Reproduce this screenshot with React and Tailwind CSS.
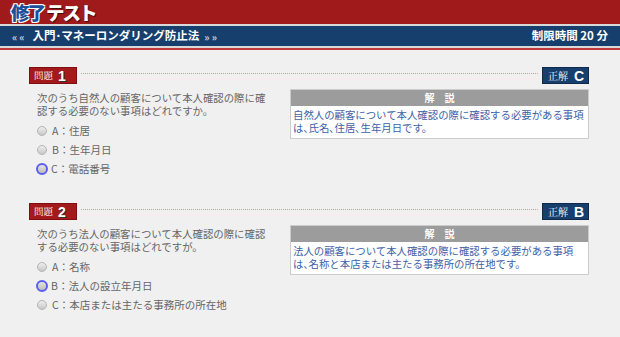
import React from "react";

const questions = [
  {
    no: "1",
    lines: ["次のうち自然人の顧客について本人確認の際に確", "認する必要のない事項はどれですか。"],
    options: ["A：住居", "B：生年月日", "C：電話番号"],
    picked: 2,
    answer: "C",
    note: ["自然人の顧客について本人確認の際に確認する必要がある事項", "は､氏名､住居､生年月日です。"],
  },
  {
    no: "2",
    lines: ["次のうち法人の顧客について本人確認の際に確認", "する必要のない事項はどれですが。"],
    options: ["A：名称", "B：法人の設立年月日", "C：本店または主たる事務所の所在地"],
    picked: 1,
    answer: "B",
    note: ["法人の顧客について本人確認の際に確認する必要がある事項", "は､名称と本店または主たる事務所の所在地です。"],
  },
];

const sans = { fontFamily: '"Noto Sans CJK JP", "Noto Sans", sans-serif' };

function Radio({ checked }) {
  if (checked) {
    return (
      <span className="w-[12px] h-[12px] rounded-full border-2 border-[#5a5ef0] bg-gradient-to-b from-[#e4e4e4] to-[#bdbdbd] shrink-0 -ml-[1px] mr-[3px]" />
    );
  }
  return (
    <span className="w-[10px] h-[10px] rounded-full border border-[#b4b4b4] bg-gradient-to-b from-[#eeeeee] to-[#c8c8c8] shrink-0 mr-[5px]" />
  );
}

function Question({ q }) {
  return (
    <div className="pl-[29px] pr-[31px]">
      <div className="flex items-center h-[17px]">
        <div className="h-[17px] w-[48px] bg-[#a3191c] border border-[#7d1013] flex items-center pl-[4px] gap-[5px]">
          <span className="text-white text-[9.5px] leading-none font-['Noto_Serif_CJK_JP','Liberation_Serif',serif]">問題</span>
          <span className="text-white text-[14px] font-bold leading-none font-['Liberation_Sans',sans-serif] [text-shadow:1px_1px_0_#333]">{q.no}</span>
        </div>
        <div className="flex-1 mx-[4px] border-t border-dotted border-[#d79a9f] -mt-[5px]" />
        <div className="h-[17px] w-[47px] bg-[#173f6d] border border-[#0f2a4c] flex items-center pl-[5px] gap-[6px]">
          <span className="text-white text-[10px] leading-none font-['Noto_Serif_CJK_JP','Liberation_Serif',serif]">正解</span>
          <span className="text-white text-[14px] font-bold leading-none font-['Liberation_Sans',sans-serif]">{q.answer}</span>
        </div>
      </div>
      <div className="flex">
        <div className="w-[261px] shrink-0 pl-[8px] pt-[8px]">
          <p className="text-[10.4px] leading-[12.5px] text-[#666666] whitespace-nowrap">
            {q.lines[0]}
            <br />
            {q.lines[1]}
          </p>
          <div className="mt-[7px] flex flex-col gap-[6px]">
            {q.options.map((o, i) => (
              <div key={i} className="flex items-center h-[13px] text-[10.5px] leading-[13px] text-[#666666]">
                <Radio checked={i === q.picked} />
                <span>{o}</span>
              </div>
            ))}
          </div>
        </div>
        <div className="flex-1 min-w-0 mt-[5px]">
          <div className="border border-[#cccccc] bg-white">
            <div className="h-[16px] bg-[#9c9c9c] flex items-center justify-center text-white text-[10px] font-bold tracking-[10px] pl-[10px] leading-none">
              解説
            </div>
            <p className="px-[2px] pt-[2px] pb-[4px] text-[10.4px] leading-[13px] text-[#3d62a8] whitespace-nowrap overflow-hidden">
              {q.note[0]}
              <br />
              {q.note[1]}
            </p>
          </div>
        </div>
      </div>
    </div>
  );
}

export default function App() {
  return (
    <div className="w-[620px] h-[337px] bg-[#f0f0f0] overflow-hidden" style={sans}>
      <div className="h-[24px] bg-[#a01a1c] flex items-center pl-[11px]">
        <span className="text-[18.5px] font-black leading-none tracking-[-2px] text-[#1c4f94] [text-shadow:1px_1px_0_#ffffff,-1px_-1px_0_#ffffff,1px_-1px_0_#ffffff,-1px_1px_0_#ffffff]">
          修了
        </span>
        <span className="text-[18.5px] font-black leading-none tracking-[-2px] text-white ml-[2px] [text-shadow:1px_1px_1px_#3a0a0a]">
          テスト
        </span>
      </div>
      <div className="h-[2px] bg-[#d9d9d9]" />
      <div className="h-[20px] bg-[#173f6d] flex items-center justify-between pl-[12px] pr-[12px] text-white font-bold">
        <div className="flex items-center">
          <span className="text-[10px] text-[#c9d3e2] tracking-[2px] mr-[6px]">«« </span>
          <span className="text-[11.5px] leading-none">入門･マネーロンダリング防止法</span>
          <span className="text-[10px] text-[#c9d3e2] tracking-[2px] ml-[5px]">»»</span>
        </div>
        <span className="text-[11.5px] leading-none">制限時間 20 分</span>
      </div>
      <div className="h-[2px] bg-[#d9d9d9]" />
      <div className="h-[2px] bg-[#c0393b]" />
      <div className="pt-[17px]">
        <Question q={questions[0]} />
        <div className="h-[28px]" />
        <Question q={questions[1]} />
      </div>
    </div>
  );
}
